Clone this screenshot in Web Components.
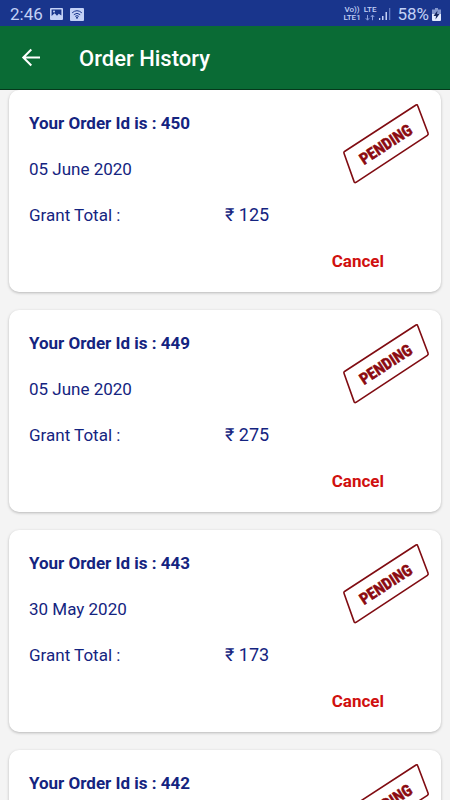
<!DOCTYPE html>
<html lang="en">
<head>
<meta charset="utf-8">
<meta name="viewport" content="width=device-width, initial-scale=1">
<title>Order History</title>
<style>
  html, body { height: 100%; margin: 0; }
  body { font-family: Roboto, "Noto Sans", sans-serif; background: #f4f4f4; }
</style>
</head>
<body>
<order-app>
  <status-bar slot="top"></status-bar>
  <app-header slot="top">Order History</app-header>
  <order-card><span slot="id">450</span><span slot="date">05 June 2020</span><span slot="total">₹ 125</span></order-card>
  <order-card><span slot="id">449</span><span slot="date">05 June 2020</span><span slot="total">₹ 275</span></order-card>
  <order-card><span slot="id">443</span><span slot="date">30 May 2020</span><span slot="total">₹ 173</span></order-card>
  <order-card brief><span slot="id">442</span></order-card>
</order-app>

<script>
const define = (name, html, setup) => customElements.define(name, class extends HTMLElement {
  constructor() {
    super();
    this.attachShadow({ mode: 'open' }).innerHTML = html;
  }
  connectedCallback() { if (setup) setup(this); }
});

define('order-app', `
<style>
  :host { display: flex; flex-direction: column; height: 100vh; }
  main { flex: 1; min-height: 0; overflow-y: auto; scrollbar-width: none; display: flex; flex-direction: column; gap: 18px; padding: 0 9px; }
</style>
<slot name="top"></slot>
<main><slot></slot></main>`);

define('status-bar', `
<style>
  :host { display: flex; align-items: center; height: 26px; padding: 2px 9px 0 10px; box-sizing: border-box; background: #19358c; color: #c3d1f6; flex: none; }
  svg { display: block; }
  .time { font-size: 17px; line-height: 24px; margin-right: 7px; }
  .left { display: flex; gap: 7px; flex: 1; }
  .net { display: grid; justify-items: center; font-size: 8px; line-height: 8px; font-weight: 500; }
  .net svg { height: 8px; }
  .right { display: flex; align-items: center; gap: 3px; }
  .pct { font-size: 17px; line-height: 24px; margin-left: 3px; }
</style>
<span class="time">2:46</span>
<span class="left">
  <svg width="13" height="12" viewBox="0 0 13 12"><rect width="13" height="12" rx="1" fill="#c3d1f6"/><path d="M1.6 1.6h9.8v6L8.8 5.8 7 7.7 4.6 5.2 1.6 8z" fill="#19358c"/><circle cx="4" cy="3.4" r="1" fill="#c3d1f6"/></svg>
  <svg width="14" height="13" viewBox="0 0 14 13"><rect width="14" height="13" rx="1" fill="#c3d1f6"/><g fill="none" stroke="#19358c"><path d="M2.2 4.8Q7 .6 11.8 4.800M3.800 6.700Q7 3.800 10.200 6.700M5.200 8.400Q7 6.800 8.800 8.400"/></g><circle cx="7" cy="9.800" r="1" fill="#19358c"/></svg>
</span>
<span class="right">
  <span class="net"><span>Vo))</span><span>LTE1</span></span>
  <span class="net"><span>LTE</span><svg width="10" height="8" viewBox="0 0 10 8" fill="none" stroke="#8a9edb"><path d="M2.500 1v5M.8 4.200l1.700 2 1.700-2M7.500 6.200v-5M5.800 3l1.700-2 1.700 2"/></svg></span>
  <svg width="12" height="12" viewBox="0 0 12 12" fill="#c3d1f6"><path d="M0 10h1.300v2H0zM3 8h1.500v4H3zM6.500 4H8v8H6.500z"/><path d="M10 0h1.300v12H10z" fill="#627bc2"/></svg>
  <span class="pct">58%</span>
  <svg width="9" height="13" viewBox="0 0 9 13"><path d="M3 0h3v1.500h3V7H0V1.500h3z" fill="#8497cf"/><path d="M0 6h9v6q0 1-1 1H1q-1 0-1-1z" fill="#e4ebff"/><path d="M5.500 2.500L1.500 8h2.500L3.500 11.500 7.500 6H5z" fill="#14265f"/></svg>
</span>`);

define('app-header', `
<style>
  :host { display: flex; align-items: center; gap: 36px; height: 64px; padding: 2px 20px 0; box-sizing: border-box; background: #0a6b35; border-bottom: 1px solid #05391c; color: #fff; flex: none; }
  button { display: block; border: 0; padding: 0; background: none; color: inherit; }
  svg { display: block; }
  h1 { margin: 0; font-size: 22px; line-height: 30px; font-weight: 500; }
</style>
<button aria-label="Back"><svg width="23" height="22" viewBox="0 0 23 22" fill="none" stroke="currentColor" stroke-width="2"><path d="M20 9.500H3.500M11.300 1.500l-8 8 8 8"/></svg></button>
<h1><slot></slot></h1>`);

define('status-stamp', `
<style>
  :host { display: block; }
  svg { display: block; overflow: visible; }
  text { font-family: "Roboto Condensed", "Open Sans Condensed", "Liberation Sans Narrow", "DejaVu Sans Condensed", sans-serif; font-size: 16px; font-weight: 700; }
</style>
<svg width="88" height="82" viewBox="0 0 88 82">
  <path d="M2.500 48.500L74 2q1.200-.8 1.700.7L86 30q.6 1.500-.6 2.300L14 79.300q-1.300.8-1.900-.7L2 50.300q-.5-1.200.5-1.800z" fill="none" stroke="#800c12" stroke-width="1.600"/>
  <text transform="translate(43.500 41) rotate(-33)" text-anchor="middle" y="6" fill="#8b0a10" stroke="#8b0a10" stroke-width=".5">PENDING</text>
</svg>`);

define('order-card', `
<style>
  :host { display: block; position: relative; flex: none; background: #fff; border-radius: 10px; box-shadow: 0 1px 3px rgba(0,0,0,.25); padding: 10px 20px 8px; color: #142480; font-size: 17px; line-height: 46px; }
  h2 { margin: 0; font: inherit; font-weight: 700; }
  p { margin: 0; }
  .total { display: grid; grid-template-columns: 1fr 1fr; }
  slot[name="total"] { font-size: 18px; }
  .actions { display: flex; justify-content: flex-end; padding-right: 37px; }
  button { border: 0; padding: 0; background: none; font: inherit; font-weight: 700; color: #d0100f; }
  status-stamp { position: absolute; top: 13px; right: 11px; }
</style>
<h2>Your Order Id is : <slot name="id"></slot></h2>
<div class="details">
  <p><slot name="date"></slot></p>
  <div class="total"><span>Grant Total :</span><slot name="total"></slot></div>
  <div class="actions"><button>Cancel</button></div>
</div>
<status-stamp></status-stamp>`, el => {
  if (el.hasAttribute('brief')) el.shadowRoot.querySelector('.details')?.remove();
});
</script>
</body>
</html>
